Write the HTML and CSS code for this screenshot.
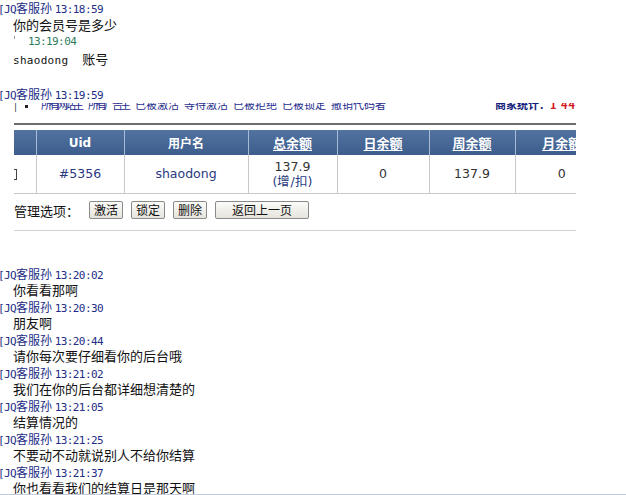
FILE: index.html
```html
<!DOCTYPE html>
<html lang="zh-CN">
<head>
<meta charset="utf-8">
<title>聊天记录</title>
<link rel="stylesheet" href="styles.css">
</head>
<body>
<div class="page">
  <div class="log1">
    <div class="hd"><span class="m">[JQ</span>客服孙 <span class="m">13:18:59</span></div>
    <div class="tx">你的会员号是多少</div>
    <div class="me"><span class="tick"></span><span class="m green">13:19:04</span></div>
    <div class="tx"><span class="m2">shaodong&nbsp;&nbsp;</span>账号</div>
    <div class="blank"></div>
  </div>
  <div class="hd hd-last"><span class="m">[JQ</span>客服孙 <span class="m">13:19:59</span></div>

  <div class="shot">
    <div class="cut">
      <div class="cut-line">
        <div class="filters">
          <span class="bar">|</span><span class="sq"></span>
          <span class="tight">所有网站主</span>
          <span class="tight">所有广告主</span>
          <span>已被激活</span>
          <span>等待激活</span>
          <span>已被拒绝</span>
          <span>已被锁定</span>
          <span>撤销代码者</span>
        </div>
        <div class="sum"><b class="sum-l">商家统计：</b><b class="sum-r">1 44</b></div>
      </div>
    </div>
    <div class="rule"></div>
    <div class="tbl">
      <table>
        <colgroup>
          <col class="c1"><col class="c2"><col class="c3"><col class="c4"><col class="c5"><col class="c6">
        </colgroup>
        <thead>
          <tr>
            <th></th>
            <th>Uid</th>
            <th>用户名</th>
            <th><u>总余额</u></th>
            <th><u>日余额</u></th>
            <th><u>周余额</u></th>
            <th><u>月余额</u></th>
          </tr>
        </thead>
        <tbody>
          <tr>
            <td class="cbcell"><span class="cb"></span></td>
            <td class="nv">#5356</td>
            <td class="nv">shaodong</td>
            <td class="num">137.9<br><span class="nv">(增/扣)</span></td>
            <td class="num">0</td>
            <td class="num">137.9</td>
            <td class="num">0</td>
          </tr>
        </tbody>
      </table>
    </div>
    <div class="ops">
      <span class="ops-label">管理选项：</span>
      <button class="btn">激活</button>
      <button class="btn">锁定</button>
      <button class="btn">删除</button>
      <button class="btn btn-wide">返回上一页</button>
    </div>
    <div class="rule2"></div>
  </div>

  <div class="log2">
    <div class="hd"><span class="m">[JQ</span>客服孙 <span class="m">13:20:02</span></div>
    <div class="tx">你看看那啊</div>
    <div class="hd"><span class="m">[JQ</span>客服孙 <span class="m">13:20:30</span></div>
    <div class="tx">朋友啊</div>
    <div class="hd"><span class="m">[JQ</span>客服孙 <span class="m">13:20:44</span></div>
    <div class="tx">请你每次要仔细看你的后台哦</div>
    <div class="hd"><span class="m">[JQ</span>客服孙 <span class="m">13:21:02</span></div>
    <div class="tx">我们在你的后台都详细想清楚的</div>
    <div class="hd"><span class="m">[JQ</span>客服孙 <span class="m">13:21:05</span></div>
    <div class="tx">结算情况的</div>
    <div class="hd"><span class="m">[JQ</span>客服孙 <span class="m">13:21:25</span></div>
    <div class="tx">不要动不动就说别人不给你结算</div>
    <div class="hd"><span class="m">[JQ</span>客服孙 <span class="m">13:21:37</span></div>
    <div class="tx">你也看看我们的结算日是那天啊</div>
  </div>
</div>
</body>
</html>
```

FILE: styles.css
```css
* { box-sizing: border-box; }
html, body { margin: 0; padding: 0; background: #fff; }
body {
  font-family: "Noto Sans CJK SC", "Noto Sans CJK TC", sans-serif;
  font-size: 13px;
  color: #111;
}
.page {
  width: 626px;
  height: 495px;
  overflow: hidden;
  border-bottom: 1px solid #c3ccdb;
}

/* chat */
.log1 { line-height: 17px; margin-top: -1px; }
.log1 > div { height: 17px; }
.hd {
  font-size: 12px;
  color: #232d86;
  margin-left: -2px;
  white-space: nowrap;
}
.m {
  font-family: "DejaVu Sans Mono", monospace;
  font-size: 11px;
  letter-spacing: -0.6px;
  line-height: 1;
}
.m2 {
  font-family: "DejaVu Sans Mono", monospace;
  font-size: 11px;
  letter-spacing: 0.3px;
  line-height: 1;
}
.tx { padding-left: 13px; white-space: nowrap; }
.me { padding-left: 14px; display: flex; align-items: center; }
.tick {
  width: 1px; height: 3px; background: #9a9a9a;
  margin-right: 13px; margin-top: -8px;
}
.green { color: #2e7b5c; }
.hd-last { line-height: 16px; height: 16px; margin-top: 2px; }

/* embedded screenshot */
.shot { padding-left: 14px; width: 576px; }
.cut { height: 9px; overflow: hidden; margin-top: 1px; }
.cut-line {
  display: flex;
  justify-content: space-between;
  margin-top: -6px;
  font-size: 11px;
  line-height: 14px;
  color: #1f2d8e;
  white-space: nowrap;
  width: 562px;
}
.filters { display: flex; gap: 5px; align-items: center; }
.bar { color: #333; }
.sq { width: 3px; height: 3px; background: #222; margin: 4px 8px 0 3px; }
.tight { letter-spacing: -3px; margin-right: 2px; }
.sum { display: flex; }
.sum-l { color: #12207a; }
.sum-r { color: #d4151a; letter-spacing: 1px; }

.rule { height: 2px; background: #6d6d6d; margin-top: 11px; width: 562px; }

.tbl { width: 562px; overflow: hidden; margin-top: 5px; }
table {
  border-collapse: collapse;
  table-layout: fixed;
  width: 594px;
  font-family: "DejaVu Sans", sans-serif;
}
col.c1 { width: 22px; }
col.c2 { width: 88px; }
col.c3 { width: 124px; }
col.c4 { width: 89px; }
col.c5 { width: 92px; }
col.c6 { width: 86px; }
th {
  height: 25px;
  padding: 0;
  background: linear-gradient(#52729f, #3d5d8d);
  color: #fff;
  font-weight: bold;
  font-size: 12px;
  font-family: "DejaVu Sans", "Noto Sans CJK SC", sans-serif;
  border-left: 1px solid #a9bad4;
  text-align: center;
}
th:first-child { border-left: none; }
th u { font-family: "Noto Sans CJK SC", sans-serif; font-size: 13px; text-underline-offset: 2px; }
td {
  height: 38px;
  padding: 0;
  text-align: center;
  border-left: 1px solid #c9c9c9;
  border-bottom: 1px solid #c9c9c9;
  font-size: 12.5px;
  color: #333;
  line-height: 15px;
}
td:first-child { border-left: none; }
td.nv, .nv { color: #283a80; }
td.num { color: #333; }
.cbcell { text-align: left; }
.cb {
  display: inline-block;
  width: 3px; height: 11px;
  border: 1px solid #444; border-left: none;
  vertical-align: middle;
}

.ops {
  display: flex;
  align-items: center;
  height: 17px;
  margin-top: 8px;
  gap: 8px;
}
.ops-label { font-size: 13px; color: #111; margin-right: 2px; }
.btn {
  font-family: "Noto Sans CJK SC", sans-serif;
  font-size: 12px;
  line-height: 14px;
  height: 18px;
  padding: 0 4px;
  background: linear-gradient(#fbfbf8, #e6e4dc);
  border: 1px solid #8a8a8a;
  border-radius: 2px;
  color: #111;
}
.btn-wide { width: 94px; }
.rule2 { height: 1px; background: #d2d2d2; margin-top: 11px; width: 562px; }

.log2 { line-height: 16.5px; margin-top: 35px; }
.log2 > div { height: 16.5px; }
```
